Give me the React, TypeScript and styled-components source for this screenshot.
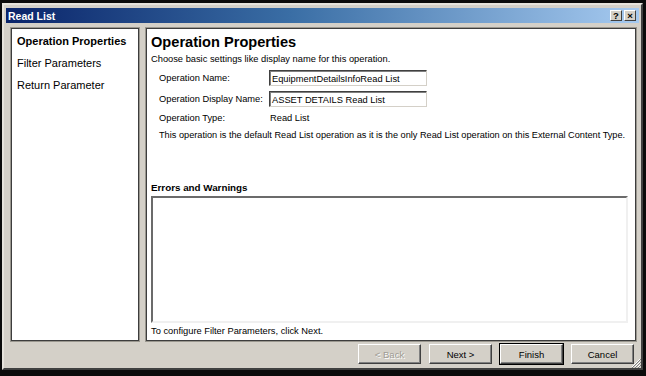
import styled, { createGlobalStyle } from 'styled-components'

const GlobalStyle = createGlobalStyle`
  html, body {
    margin: 0;
    padding: 0;
    background: #000;
  }
  body {
    font-family: "Liberation Sans", Arial, sans-serif;
  }
`

const Frame = styled.div`
  width: 646px;
  height: 376px;
  box-sizing: border-box;
  padding: 3px 3px 6px 2px;
  background: #0b0b0b;
`
const Dialog = styled.div`
  height: 100%;
  box-sizing: border-box;
  display: flex;
  flex-direction: column;
  background: #d4d0c8;
  border: 2px solid;
  border-color: #e6e3dc #404040 #404040 #e6e3dc;
  padding: 3px 2px 0 2px;
  position: relative;
`
const TitleBar = styled.div`
  height: 15px;
  display: flex;
  align-items: center;
  justify-content: space-between;
  padding: 0 3px 0 2px;
  background: linear-gradient(to right, #0a246a 0%, #3a6ea5 45%, #a6caf0 100%);
`
const Title = styled.span`
  color: #fff;
  font-weight: 700;
  font-size: 10.5px;
`
const CaptionButtons = styled.div`
  display: flex;
  gap: 2px;
`
const CaptionButton = styled.div`
  width: 12px;
  height: 11px;
  box-sizing: border-box;
  background: #d4d0c8;
  border: 1px solid;
  border-color: #fff #404040 #404040 #fff;
  display: flex;
  align-items: center;
  justify-content: center;
  font-size: 9.5px;
  font-weight: 700;
  line-height: 1;
  color: #000;
`
const Body = styled.div`
  display: flex;
  gap: 7px;
  margin-top: 5px;
  padding: 0 3px 0 5px;
  height: 313px;
`
const Panel = styled.div`
  background: #fff;
  border: 1px solid #3d3d3d;
  box-shadow: 0 0 0 1px #9a978f;
  box-sizing: border-box;
`
const NavPanel = styled(Panel)`
  width: 128px;
  padding: 5px 0 0 5px;
  display: flex;
  flex-direction: column;
  gap: 7px;
`
const NavItem = styled.div<{ $active?: boolean }>`
  font-size: 11px;
  font-weight: ${(p) => (p.$active ? 700 : 400)};
  color: #000;
  line-height: 15px;
`
const MainPanel = styled(Panel)`
  flex: 1;
  min-width: 0;
  display: flex;
  flex-direction: column;
  padding: 4px 7px 5px 4px;
  font-size: 9.3px;
  color: #000;
`
const Heading = styled.h1`
  margin: 0;
  font-size: 14.6px;
  font-weight: 700;
  line-height: 19px;
`
const Subtitle = styled.div`
  line-height: 12px;
  margin-top: 1px;
`
const Form = styled.div`
  display: grid;
  grid-template-columns: 110px 158px;
  row-gap: 5px;
  align-items: center;
  margin: 5px 0 0 8px;
`
const Label = styled.div`
  line-height: 12px;
`
const TextBox = styled.div`
  height: 16px;
  box-sizing: border-box;
  border: 1px solid;
  border-color: #404040 #d4d0c8 #d4d0c8 #404040;
  box-shadow: inset 1px 1px 0 #808080;
  background: #fff;
  padding: 2px 0 0 2px;
  line-height: 12px;
  white-space: nowrap;
  overflow: hidden;
`
const Value = styled.div`
  line-height: 12px;
  padding-left: 1px;
`
const Description = styled.div`
  margin: 5px -8px 0 8px;
  line-height: 12px;
  white-space: nowrap;
  font-size: 9.2px;
`
const SectionTitle = styled.div`
  margin-top: 41px;
  font-size: 9.8px;
  font-weight: 700;
  line-height: 12px;
`
const MessageBox = styled.div`
  margin-top: 2px;
  height: 127px;
  flex-shrink: 0;
  box-sizing: border-box;
  border: 2px solid;
  border-color: #6b6b6b #f0f0f0 #f0f0f0 #6b6b6b;
  background: #fff;
`
const Hint = styled.div`
  margin-top: 2px;
  line-height: 12px;
`
const ButtonRow = styled.div`
  display: flex;
  justify-content: flex-end;
  gap: 8px;
  margin-top: 3px;
  padding-right: 5px;
`
const Button = styled.button<{ $default?: boolean }>`
  width: 63px;
  height: 20px;
  box-sizing: border-box;
  background: #d4d0c8;
  font-family: "Liberation Sans", Arial, sans-serif;
  font-size: 9.5px;
  color: #000;
  padding: 0;
  border: 1px solid;
  border-color: #fff #404040 #404040 #fff;
  box-shadow: inset -1px -1px 0 #808080;
  outline: ${(p) => (p.$default ? '1px solid #000' : 'none')};
  &:disabled {
    color: #a09c94;
    text-shadow: 1px 1px 0 #fff;
  }
`
const Grip = styled.svg`
  position: absolute;
  right: 0;
  bottom: 0;
`

export default function App() {
  return (
    <Frame>
      <GlobalStyle />
      <Dialog>
        <TitleBar>
          <Title>Read List</Title>
          <CaptionButtons>
            <CaptionButton>?</CaptionButton>
            <CaptionButton>×</CaptionButton>
          </CaptionButtons>
        </TitleBar>
        <Body>
          <NavPanel>
            <NavItem $active>Operation Properties</NavItem>
            <NavItem>Filter Parameters</NavItem>
            <NavItem>Return Parameter</NavItem>
          </NavPanel>
          <MainPanel>
            <Heading>Operation Properties</Heading>
            <Subtitle>Choose basic settings like display name for this operation.</Subtitle>
            <Form>
              <Label>Operation Name:</Label>
              <TextBox>EquipmentDetailsInfoRead List</TextBox>
              <Label>Operation Display Name:</Label>
              <TextBox>ASSET DETAILS Read List</TextBox>
              <Label>Operation Type:</Label>
              <Value>Read List</Value>
            </Form>
            <Description>
              This operation is the default Read List operation as it is the only Read List
              operation on this External Content Type.
            </Description>
            <SectionTitle>Errors and Warnings</SectionTitle>
            <MessageBox />
            <Hint>To configure Filter Parameters, click Next.</Hint>
          </MainPanel>
        </Body>
        <ButtonRow>
          <Button disabled>&lt; Back</Button>
          <Button>Next &gt;</Button>
          <Button $default>Finish</Button>
          <Button>Cancel</Button>
        </ButtonRow>
        <Grip width="11" height="11" viewBox="0 0 11 11">
          <path d="M10 2 L2 10 M10 5 L5 10 M10 8 L8 10" stroke="#fff" strokeWidth="1" />
          <path d="M11 2 L2 11 M11 5 L5 11 M11 8 L8 11" stroke="#808080" strokeWidth="1" />
        </Grip>
      </Dialog>
    </Frame>
  )
}
